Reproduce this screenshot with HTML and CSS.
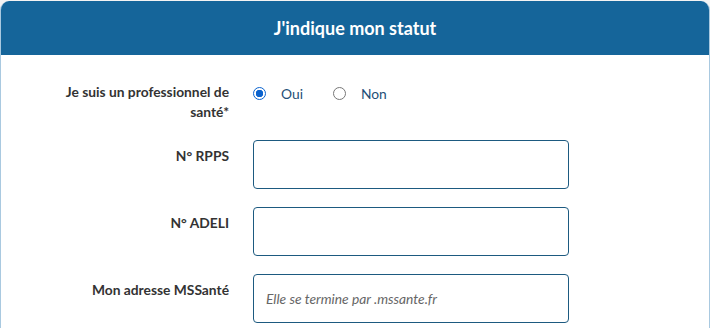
FILE: index.html
```html
<!DOCTYPE html>
<html lang="fr">
<head>
  <meta charset="UTF-8">
  <meta name="viewport" content="width=device-width, initial-scale=1.0">
  <link rel="stylesheet" href="styles.css">
</head>
<body>

  <section class="card">
    <header class="card-head">
      <h2>J'indique mon statut</h2>
    </header>

    <form class="status-form">
      <div class="row">
        <span class="label">Je suis un professionnel de santé*</span>
        <div class="radios">
          <label class="radio">
            <input type="radio" name="pro" checked>
            <span class="dot"></span>
            Oui
          </label>
          <label class="radio">
            <input type="radio" name="pro">
            <span class="dot"></span>
            Non
          </label>
        </div>
      </div>

      <div class="row">
        <label class="label field-label" for="rpps">N° RPPS</label>
        <input type="text" id="rpps" class="field">
      </div>

      <div class="row">
        <label class="label field-label" for="adeli">N° ADELI</label>
        <input type="text" id="adeli" class="field">
      </div>

      <div class="row">
        <label class="label field-label" for="mss">Mon adresse MSSanté</label>
        <input type="text" id="mss" class="field" placeholder="Elle se termine par .mssante.fr">
      </div>
    </form>
  </section>

</body>
</html>
```

FILE: styles.css
```css
body {
  margin: 0;
  padding-top: 1px;
  background-color: #f3f3f3;
  font-family: Lato, "Open Sans", sans-serif;
}

.card {
  width: 708px;
  height: 400px;
  background-color: #fff;
  border: 1px solid #a9c9e0;
  border-top: none;
  border-radius: 9px 9px 0 0;
  overflow: hidden;
}

.card-head {
  height: 54px;
  background-color: #15659a;
  display: flex;
  align-items: center;
  justify-content: center;
}

.card-head h2 {
  margin: 0;
  color: #fff;
  font-size: 18px;
  font-weight: 700;
}

.status-form {
  padding: 27px 0 0 62px;
  display: flex;
  flex-direction: column;
  gap: 18px;
}

.row {
  display: grid;
  grid-template-columns: 166px 316px;
  column-gap: 24px;
  align-items: start;
}

.label {
  text-align: right;
  font-size: 13.8px;
  line-height: 20px;
  font-weight: 700;
  color: #333;
}

.field-label {
  padding-top: 6px;
}

.radios {
  display: flex;
  gap: 30px;
  height: 20px;
  align-items: center;
  padding-top: 1px;
}

.radio {
  display: flex;
  align-items: center;
  gap: 15px;
  font-size: 13.8px;
  color: #1e4f77;
}

.radio input {
  display: none;
}

.dot {
  width: 11px;
  height: 11px;
  border: 1px solid #777;
  border-radius: 50%;
  background: #fff;
  box-sizing: content-box;
}

.radio input:checked + .dot {
  border-color: #0b63ce;
  background: radial-gradient(circle, #0b63ce 0 3.5px, #fff 4px);
}

.field {
  box-sizing: border-box;
  width: 316px;
  height: 49px;
  margin: 0;
  padding: 0 12px;
  border: 1px solid #1d5a80;
  border-radius: 4px;
  font-family: inherit;
  font-size: 13.8px;
}

.field::placeholder {
  font-style: italic;
  color: #666;
}
```
